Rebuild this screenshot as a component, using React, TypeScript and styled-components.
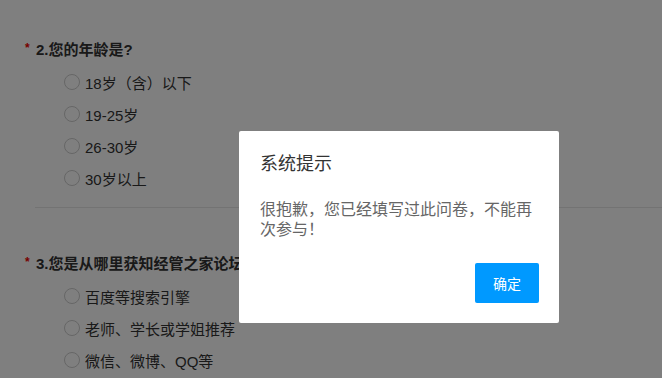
import styled, { createGlobalStyle } from "styled-components";

const GlobalStyle = createGlobalStyle`
  html, body {
    margin: 0;
    padding: 0;
    background: #fff;
    font-family: "Liberation Sans", "Noto Sans CJK SC", sans-serif;
    overflow: hidden;
  }
`;

const Page = styled.div`
  width: 662px;
  height: 378px;
  padding: 38px 0 0 25px;
  box-sizing: border-box;
`;

const Question = styled.div``;

const Title = styled.div`
  display: flex;
  align-items: center;
  height: 20px;
  font-size: 15px;
  font-weight: bold;
  color: #333;
  white-space: nowrap;
`;

const Star = styled.span`
  color: #e00;
  width: 11px;
  font-size: 12px;
`;

const Options = styled.div`
  margin-top: 8px;
  padding-left: 39px;
`;

const Option = styled.label`
  display: flex;
  align-items: center;
  height: 32px;
  font-size: 15px;
  color: #333;
  white-space: nowrap;
`;

const Radio = styled.span`
  width: 16px;
  height: 16px;
  border: 1px solid #ccc;
  border-radius: 50%;
  box-sizing: border-box;
  margin-right: 5px;
  background: #fff;
`;

const Divider = styled.div`
  height: 1px;
  background: #e6e6e6;
  margin: 13px 0 44px 10px;
`;

const Mask = styled.div`
  position: fixed;
  inset: 0;
  background: rgba(0, 0, 0, 0.5);
`;

const Dialog = styled.div`
  position: fixed;
  left: 239px;
  top: 131px;
  width: 320px;
  padding: 21px 20px 20px 21px;
  box-sizing: border-box;
  background: #fff;
  border-radius: 2px;
`;

const DialogTitle = styled.div`
  font-size: 18px;
  line-height: 24px;
  color: #333;
`;

const DialogBody = styled.div`
  margin-top: 24px;
  font-size: 16px;
  line-height: 20px;
  color: #666;
`;

const Footer = styled.div`
  display: flex;
  justify-content: flex-end;
  margin-top: 23px;
`;

const OkButton = styled.button`
  width: 64px;
  height: 40px;
  border: 0;
  border-radius: 2px;
  background: #0099ff;
  color: #fff;
  font-size: 14px;
  font-family: inherit;
  cursor: pointer;
`;

const questions = [
  {
    title: "2.您的年龄是?",
    options: ["18岁（含）以下", "19-25岁", "26-30岁", "30岁以上"],
  },
  {
    title: "3.您是从哪里获知经管之家论坛的?",
    options: ["百度等搜索引擎", "老师、学长或学姐推荐", "微信、微博、QQ等"],
  },
];

export default function App() {
  return (
    <>
      <GlobalStyle />
      <Page>
        {questions.map((q, i) => (
          <Question key={q.title}>
            <Title>
              <Star>*</Star>
              {q.title}
            </Title>
            <Options>
              {q.options.map((o) => (
                <Option key={o}>
                  <Radio />
                  {o}
                </Option>
              ))}
            </Options>
            {i < questions.length - 1 ? <Divider /> : null}
          </Question>
        ))}
      </Page>
      <Mask />
      <Dialog>
        <DialogTitle>系统提示</DialogTitle>
        <DialogBody>很抱歉，您已经填写过此问卷，不能再次参与！</DialogBody>
        <Footer>
          <OkButton>确定</OkButton>
        </Footer>
      </Dialog>
    </>
  );
}
